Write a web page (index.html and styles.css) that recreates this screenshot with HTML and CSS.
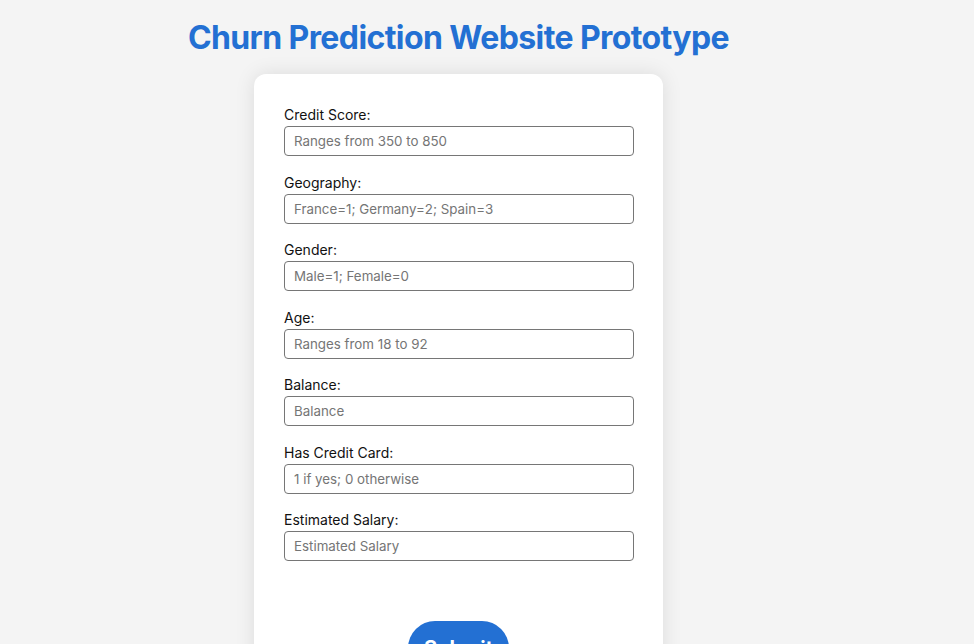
FILE: index.html
```html
<!DOCTYPE html>
<html lang="en">
<head>
<meta charset="utf-8">
<title>Churn Prediction Website Prototype</title>
<link rel="stylesheet" href="styles.css">
</head>
<body>
<div class="page">
  <h1 class="title">Churn Prediction Website Prototype</h1>
  <form class="card">
    <div class="field">
      <label class="label">Credit Score:</label>
      <input class="input" type="text" placeholder="Ranges from 350 to 850">
    </div>
    <div class="field">
      <label class="label">Geography:</label>
      <input class="input" type="text" placeholder="France=1; Germany=2; Spain=3">
    </div>
    <div class="field">
      <label class="label">Gender:</label>
      <input class="input" type="text" placeholder="Male=1; Female=0">
    </div>
    <div class="field">
      <label class="label">Age:</label>
      <input class="input" type="text" placeholder="Ranges from 18 to 92">
    </div>
    <div class="field">
      <label class="label">Balance:</label>
      <input class="input" type="text" placeholder="Balance">
    </div>
    <div class="field">
      <label class="label">Has Credit Card:</label>
      <input class="input" type="text" placeholder="1 if yes; 0 otherwise">
    </div>
    <div class="field">
      <label class="label">Estimated Salary:</label>
      <input class="input" type="text" placeholder="Estimated Salary">
    </div>
    <div class="actions">
      <button class="submit" type="button">Submit</button>
    </div>
  </form>
</div>
</body>
</html>
```
FILE: styles.css
```css
html, body {
  margin: 0;
  padding: 0;
  background: #f4f4f4;
  font-family: Inter, "Noto Sans", sans-serif;
  color: #111;
}
.page {
  width: 917px;
  display: flex;
  flex-direction: column;
  align-items: center;
  padding-top: 18px;
}
.title {
  margin: 0 0 17px 0;
  font-size: 32px;
  line-height: 39px;
  font-weight: 700;
  color: #2370d3;
  letter-spacing: -0.6px;
}
.card {
  width: 409px;
  box-sizing: border-box;
  background: #fff;
  border-radius: 12px;
  box-shadow: 0 0 20px rgba(0, 0, 0, 0.1);
  padding: 32px 30px 40px 30px;
}
.field {
  display: flex;
  flex-direction: column;
  margin-bottom: 17.5px;
}
.label {
  font-size: 14px;
  line-height: 17px;
  margin-bottom: 3px;
  color: #111;
}
.input {
  box-sizing: border-box;
  width: 350px;
  height: 30px;
  border: 1px solid #767676;
  border-radius: 4px;
  padding: 0 9px;
  font-family: Inter, "Noto Sans", sans-serif;
  font-size: 13.333px;
  color: #111;
  background: #fff;
}
.input::placeholder {
  color: #757575;
}
.actions {
  display: flex;
  justify-content: center;
  padding-top: 42px;
}
.submit {
  background: #2370d3;
  color: #fff;
  border: none;
  border-radius: 28px;
  font-family: Inter, "Noto Sans", sans-serif;
  font-weight: 700;
  font-size: 20px;
  line-height: 24px;
  width: 101px;
  padding: 15px 0;
  cursor: pointer;
}
```
